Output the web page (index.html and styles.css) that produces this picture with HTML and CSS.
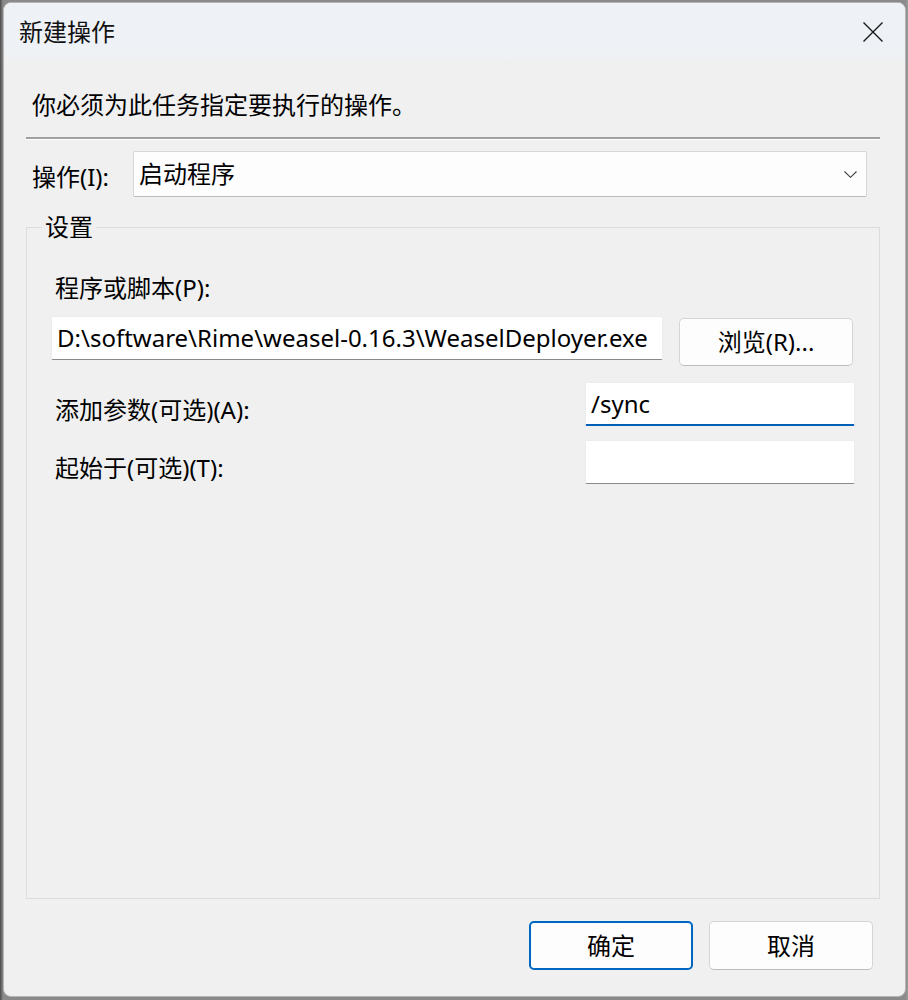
FILE: index.html
```html
<!DOCTYPE html>
<html lang="zh-CN">
<head>
<meta charset="utf-8">
<title>新建操作</title>
<link rel="stylesheet" href="styles.css">
</head>
<body>
<div class="window">
  <div class="titlebar">
    <span class="title">新建操作</span>
    <svg class="close" width="20" height="20" viewBox="0 0 20 20"><path d="M0.5 0.5 L19.5 19.5 M19.5 0.5 L0.5 19.5" stroke="#1a1a1a" stroke-width="1.4" fill="none"/></svg>
  </div>
  <div class="content">
    <p class="intro">你必须为此任务指定要执行的操作。</p>
    <div class="sep"></div>
    <div class="action-row">
      <span class="action-label">操作(I):</span>
      <div class="combo">
        <span class="combo-text">启动程序</span>
        <svg class="chevron" width="13" height="7" viewBox="0 0 13 7"><path d="M0.5 0.5 L6.5 6.3 L12.5 0.5" stroke="#404040" stroke-width="1.1" fill="none"/></svg>
      </div>
    </div>
    <div class="group">
      <div class="group-title">设置</div>
      <div class="field-label">程序或脚本(P):</div>
      <div class="prog-row">
        <div class="input prog">D:\software\Rime\weasel-0.16.3\WeaselDeployer.exe</div>
        <div class="btn browse">浏览(R)...</div>
      </div>
      <div class="arg-row first">
        <span class="arg-label">添加参数(可选)(A):</span>
        <div class="input arg focused">/sync</div>
      </div>
      <div class="arg-row second">
        <span class="arg-label">起始于(可选)(T):</span>
        <div class="input arg"></div>
      </div>
    </div>
    <div class="buttons">
      <div class="btn dlg primary">确定</div>
      <div class="btn dlg">取消</div>
    </div>
  </div>
</div>
</body>
</html>
```
FILE: styles.css
```css
* { box-sizing: border-box; }
html, body { margin: 0; padding: 0; }
body {
  width: 908px;
  height: 1000px;
  background: linear-gradient(90deg, #4a4a4a 0, #8a8a8a 3px, #8a8a8a 905px, #9a9a9a 908px);
  font-family: "Noto Sans", "Noto Sans CJK SC", sans-serif;
  color: #000;
  overflow: hidden;
}
.window {
  margin: 2px 2px 0 3px;
  width: 903px;
  height: 995px;
  background: #f0f0f0;
  border: 1px solid #b5b5b5;
  border-radius: 8px;
  display: flex;
  flex-direction: column;
  overflow: hidden;
}
.titlebar {
  height: 57px;
  flex: none;
  display: flex;
  align-items: center;
  justify-content: space-between;
  padding: 0 22px 0 15px;
  background: linear-gradient(180deg, #eef1f6 0, #eef2f7 44px, #f0f0f0 62px);
}
.title {
  font-size: 24px;
  line-height: 30px;
  color: #111;
}
.close { display: block; margin-top: 1px; }
.content {
  flex: 1;
  display: flex;
  flex-direction: column;
  padding: 0 25px 0 22px;
  font-size: 24px;
  line-height: 30px;
}
.intro {
  margin: 30px 0 0 6px;
}
.sep {
  margin-top: 17px;
  height: 3px;
  border-top: 2px solid #a0a0a0;
  border-bottom: 1px solid #ffffff;
}
.action-row {
  margin-top: 11px;
  display: flex;
  align-items: center;
  padding: 0 13px 0 6px;
}
.action-label {
  width: 101px;
  flex: none;
  margin-top: 6px;
}
.combo {
  flex: 1;
  height: 46px;
  background: #fdfdfd;
  border: 1px solid #d6d6d6;
  border-bottom-color: #bdbdbd;
  border-radius: 2px;
  display: flex;
  align-items: center;
  justify-content: space-between;
  padding: 0 9px 0 5px;
}
.chevron { display: block; margin-top: 1px; }
.group {
  margin-top: 30px;
  flex: none;
  height: 672px;
  border: 1px solid #dcdcdc;
  padding: 0 24px 0 24px;
}
.group-title {
  width: fit-content;
  margin: -16px 0 0 -9px;
  padding: 0 3px;
  background: #f0f0f0;
}
.field-label {
  margin: 31px 0 0 4px;
}
.prog-row {
  margin-top: 13px;
  display: flex;
  align-items: flex-start;
}
.input {
  height: 44px;
  background: #ffffff;
  border: 1px solid #ececec;
  border-bottom-color: #8a8a8a;
  border-radius: 2px;
  padding: 0 5px;
  display: flex;
  align-items: center;
}
.input.prog {
  width: 612px;
  flex: none;
  white-space: nowrap;
  overflow: hidden;
}
.input.arg {
  width: 270px;
  flex: none;
}
.input.focused {
  border-bottom: 2px solid #005fb8;
}
.btn {
  background: #fdfdfd;
  border: 1px solid #d5d5d5;
  border-bottom-color: #bcbcbc;
  border-radius: 5px;
  display: flex;
  align-items: center;
  justify-content: center;
  color: #000;
}
.browse {
  margin: 2px 3px 0 16px;
  width: 174px;
  height: 48px;
  flex: none;
}
.arg-row {
  display: flex;
  justify-content: space-between;
  align-items: center;
  padding-left: 4px;
}
.arg-row.first { margin-top: 16px; }
.arg-row.second { margin-top: 14px; }
.arg-label { margin-top: 12px; }
.buttons {
  margin-top: 22px;
  display: flex;
  justify-content: flex-end;
  gap: 16px;
  padding-right: 7px;
}
.dlg {
  width: 164px;
  height: 49px;
}
.dlg.primary {
  border: 2px solid #0067c0;
}
```
